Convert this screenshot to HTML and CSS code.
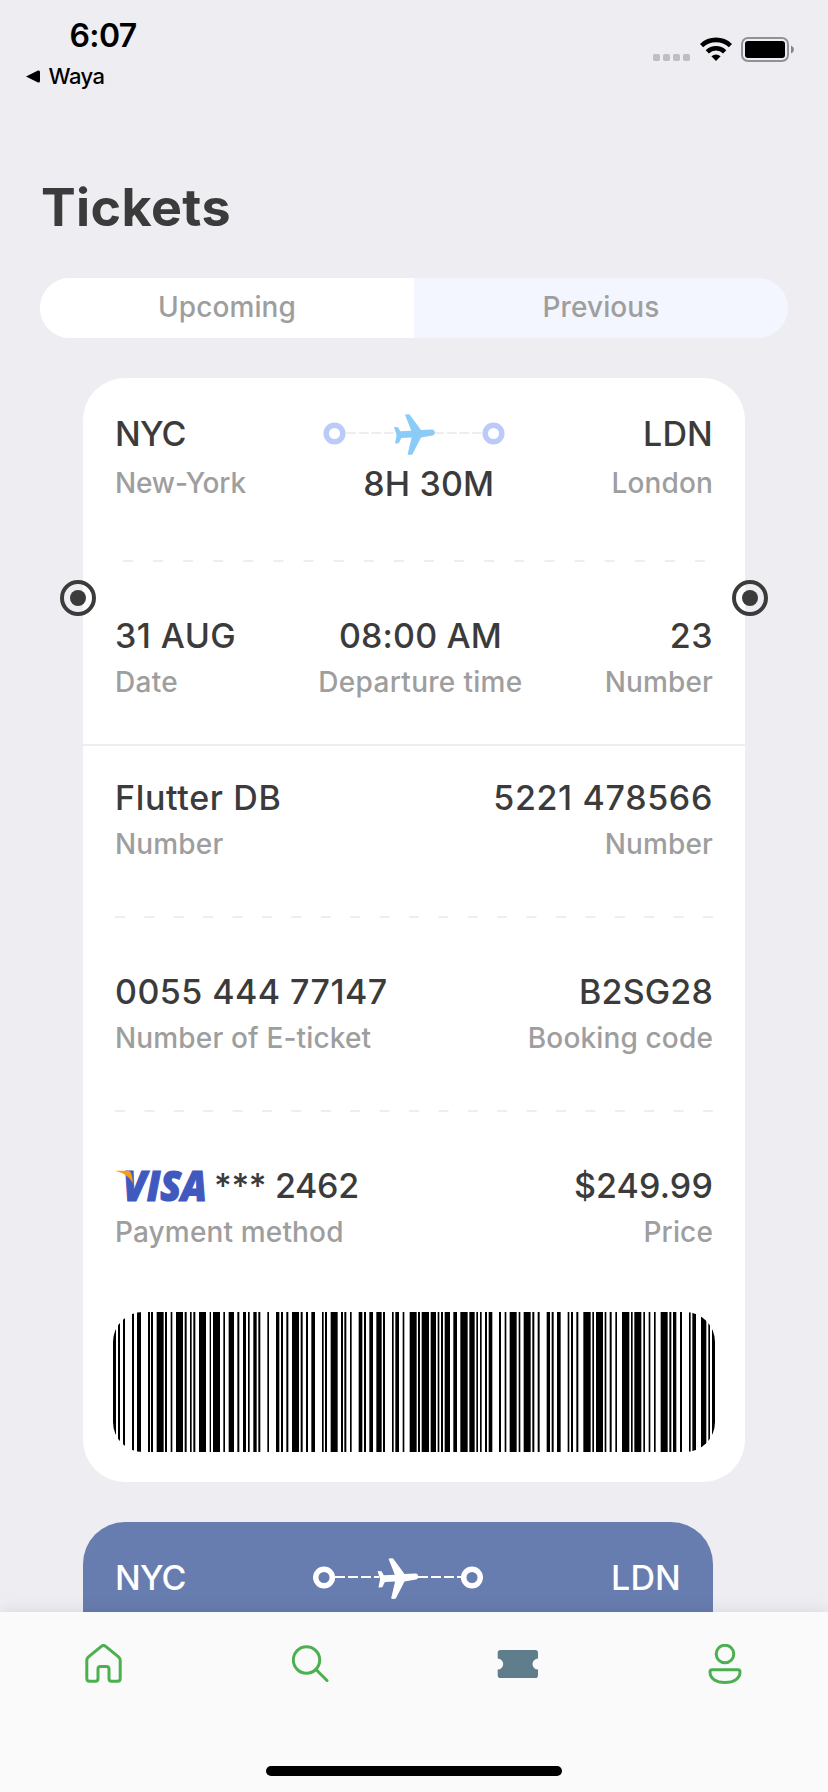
FILE: index.html
```html
<!DOCTYPE html>
<html lang="en">
<head>
<meta charset="utf-8">
<title>Tickets</title>
<link rel="stylesheet" href="styles.css">
</head>
<body>
<svg class="defs" aria-hidden="true">
  <symbol id="plane" viewBox="0 0 41 41"><path d="M0 13L4 13.2L6.3 17.2L17.3 16.8L11 .7Q13 0 15.6 .4L27 16.1L38 15.5C41.6 15.6 41.6 21 38.4 21.5L27 23.6L18.3 40.6Q16 41.2 13.6 40.6L17.6 23.6L7.4 24.1L4.8 29.3L1 29.6L2.6 21.3Z"/></symbol>
</svg>
<div class="screen">
  <header class="status">
    <div class="status-left">
      <div class="clock">6:07</div>
      <div class="back"><svg width="14" height="13" viewBox="0 0 14 13"><path d="M0 6.5L12 .5Q14 0 14 2V11Q14 13 12 12.5Z"/></svg><span>Waya</span></div>
    </div>
    <div class="status-right">
      <svg width="37" height="7" viewBox="0 0 37 7" fill="#bfbec3"><rect width="7" height="7" rx="1.8"/><rect x="10" width="7" height="7" rx="1.8"/><rect x="20" width="7" height="7" rx="1.8"/><rect x="30" width="7" height="7" rx="1.8"/></svg>
      <svg width="32" height="24" viewBox="0 0 32 24"><g fill="none" stroke="#000" stroke-width="4.6"><path d="M1.6 8.6A21 21 0 0 1 30.4 8.6"/><path d="M7.3 14.8A12.6 12.6 0 0 1 24.7 14.8"/></g><path d="M11.4 19.2Q16 15.8 20.6 19.2L16 24Z"/></svg>
      <svg width="53" height="25" viewBox="0 0 53 25"><rect x="1" y="1" width="46" height="23" rx="6" fill="none" stroke="#929196" stroke-width="2"/><rect x="4" y="4" width="40" height="17" rx="3"/><path d="M50 8.5Q53 10 53 12.5T50 16.5Z" fill="#858488"/></svg>
    </div>
  </header>

  <main class="content">
    <h1 class="title">Tickets</h1>
    <div class="tabs"><div class="tab active">Upcoming</div><div class="tab">Previous</div></div>

    <section class="ticket">
      <div class="route">
        <span class="value tight">NYC</span>
        <svg width="182" height="41" viewBox="0 0 182 41"><g fill="none" stroke="#bacbf8" stroke-width="5.5"><circle cx="11.5" cy="19.5" r="8.3"/><circle cx="170.5" cy="19.5" r="8.3"/></g><path d="M23 19H71M111 19H160" stroke="#eee" stroke-width="2" stroke-dasharray="10 2.7"/><use href="#plane" x="71" y="0" width="41" height="41" fill="#8accf7"/></svg>
        <span class="value end">LDN</span>
      </div>
      <div class="row cities"><span class="label snug">New-York</span><span class="value">8H 30M</span><span class="label">London</span></div>
      <div class="perforation"><svg width="582" height="2"><path d="M0 1H582" stroke="#eee" stroke-width="2" stroke-dasharray="10 20.1"/></svg></div>
      <div class="row details">
        <div class="cell"><span class="value medium">31 AUG</span><span class="label roomy">Date</span></div>
        <div class="cell mid"><span class="value">08:00 AM</span><span class="label roomy">Departure time</span></div>
        <div class="cell end"><span class="value medium">23</span><span class="label">Number</span></div>
      </div>
      <svg class="mark mark-left" viewBox="0 0 36 36"><circle cx="18" cy="18" r="16" fill="none" stroke="#3b3b3b" stroke-width="4"/><circle cx="18" cy="18" r="8" fill="#3b3b3b"/></svg>
      <svg class="mark mark-right" viewBox="0 0 36 36"><circle cx="18" cy="18" r="16" fill="none" stroke="#3b3b3b" stroke-width="4"/><circle cx="18" cy="18" r="8" fill="#3b3b3b"/></svg>
      <div class="rule"></div>
      <div class="row">
        <div class="cell"><span class="value wide">Flutter DB</span><span class="label">Number</span></div>
        <div class="cell end"><span class="value wide">5221 478566</span><span class="label">Number</span></div>
      </div>
      <svg class="dashes" width="598" height="2"><path d="M0 1H598" stroke="#eee" stroke-width="2" stroke-dasharray="10 19.4"/></svg>
      <div class="row details">
        <div class="cell"><span class="value medium">0055 444 77147</span><span class="label">Number of E-ticket</span></div>
        <div class="cell end"><span class="value">B2SG28</span><span class="label">Booking code</span></div>
      </div>
      <svg class="dashes" width="598" height="2"><path d="M0 1H598" stroke="#eee" stroke-width="2" stroke-dasharray="10 19.4"/></svg>
      <div class="row details">
        <div class="cell"><div class="payment"><svg class="visa" width="90" height="32" viewBox="0 0 90 32"><text class="visa-text" x="8" y="31" textLength="84" lengthAdjust="spacingAndGlyphs">VISA</text><path d="M0 .8H13.5Q17.5 1.2 17.8 13.5C15 7 9 3 0 .8Z" fill="#f99b14"/></svg><span class="value card-number">*** 2462</span></div><span class="label">Payment method</span></div>
        <div class="cell end"><span class="value">$249.99</span><span class="label">Price</span></div>
      </div>
      <svg class="barcode" viewBox="0 0 1806 420" preserveAspectRatio="none"><path id="bars"/></svg>
    </section>

    <section class="ticket blue">
      <div class="route">
        <span class="value tight">NYC</span>
        <svg width="170" height="41" viewBox="0 0 170 41"><g fill="none" stroke="#fff" stroke-width="5.5"><circle cx="11" cy="19.5" r="8.3"/><circle cx="159" cy="19.5" r="8.3"/></g><path d="M22 19H66M105 19H150" stroke="#fff" stroke-width="2" stroke-dasharray="10 3"/><use href="#plane" x="64.5" y="0" width="41" height="41" fill="#fff"/></svg>
        <span class="value end">LDN</span>
      </div>
    </section>
  </main>

  <nav class="nav">
    <div class="nav-items">
      <svg width="37" height="40" viewBox="0 0 37 40" class="line"><path d="M16 2.6Q18.5.4 21 2.6L33.5 12.8Q35.2 14.2 35.2 16.5V34.5Q35.2 37.3 32.4 37.3H26.6Q24 37.3 24 34.5V25Q24 22.4 21.4 22.4H15.6Q13 22.4 13 25V34.5Q13 37.3 10.4 37.3H4.6Q1.8 37.3 1.8 34.5V16.5Q1.8 14.2 3.5 12.8Z"/></svg>
      <svg width="37" height="40" viewBox="0 0 37 40" class="line"><circle cx="14.5" cy="16" r="13.2"/><path d="M24 25.5L35 36.5" stroke-linecap="round"/></svg>
      <svg width="42" height="40" viewBox="0 0 42 40"><path d="M3.5 6H38.2Q41 6 41 8.8V14.6A5.5 5.5 0 0 0 41 25.6V31.2Q41 34 38.2 34H3.5Q.7 34 .7 31.2V25.6A5.5 5.5 0 0 0 .7 14.6V8.8Q.7 6 3.5 6Z" fill="#5f7d8b"/></svg>
      <svg width="34" height="40" viewBox="0 0 34 40" class="line"><circle cx="17" cy="10" r="8.8"/><path d="M4 25.7H30Q32 25.7 32 28C32 34.5 26 38.4 17 38.4S2 34.5 2 28Q2 25.7 4 25.7Z"/></svg>
    </div>
    <div class="home-bar"></div>
  </nav>
</div>
<script src="barcode.js"></script>
</body>
</html>
```
FILE: styles.css
```css
* { box-sizing: border-box; }
body { margin: 0; background: #eeedf2; font-family: Inter, "Noto Sans", sans-serif; font-weight: 500; color: #3b3b3b; }
svg { display: block; flex: none; }
.defs { position: absolute; width: 0; height: 0; }
.screen { width: 828px; height: 1792px; display: flex; flex-direction: column; overflow: hidden; }
.status { flex: none; height: 176px; padding: 16px 34px 0 26px; display: flex; justify-content: space-between; color: #000; }
.clock { font-size: 32px; line-height: 40px; font-weight: 600; padding-left: 43.5px; letter-spacing: -.6px; }
.back { display: flex; align-items: center; gap: 8.5px; font-size: 22px; line-height: 27px; padding-top: 7px; letter-spacing: -.5px; }
.status-right { display: flex; align-items: flex-end; gap: 10px; height: 45px; }
.status-right svg:last-child { margin-bottom: -1px; margin-left: -1px; }
.content { flex: 1; min-height: 0; overflow: hidden; }
.title { margin: 0 0 38px 41px; font-size: 52px; line-height: 64px; font-weight: 680; letter-spacing: .4px; }
.tabs { display: flex; width: 748px; height: 60px; margin: 0 40px 40px; border-radius: 30px; overflow: hidden; background: #f3f6fe; }
.tab { flex: 1; text-align: center; font-size: 28px; line-height: 58px; letter-spacing: .1px; color: #9e9e9e; }
.tab.active { background: #fff; }
.ticket { position: relative; width: 662px; height: 1104px; margin: 0 0 40px 83px; padding: 36px 32px 30px; border-radius: 42px; background: #fff; }
.route { display: grid; grid-template-columns: 1fr auto 1fr; height: 40px; }
.value { display: block; font-size: 34px; line-height: 40px; font-weight: 460; letter-spacing: .15px; white-space: nowrap; }
.label { display: block; font-size: 28px; line-height: 36px; letter-spacing: .15px; color: #9e9e9e; white-space: nowrap; }
.tight { letter-spacing: -.8px; }
.snug { letter-spacing: -.15px; }
.card-number { letter-spacing: -.3px; }
.medium { letter-spacing: .45px; }
.wide { letter-spacing: .65px; }
.roomy { letter-spacing: .3px; }
.end { text-align: right; justify-self: end; }
.row { display: flex; justify-content: space-between; }
.cell { display: flex; flex-direction: column; gap: 8px; }
.mid { align-items: center; }
.cities { margin-top: 10px; height: 40px; }
.cities .label { line-height: 38px; }
.perforation { margin-top: 56px; padding-left: 8px; }
.details { margin-top: 54px; }
.mark { position: absolute; top: 202px; width: 36px; height: 36px; }
.mark-left { left: -23px; }
.mark-right { right: -23px; }
.rule { height: 2px; margin: 44px -32px 32px; background: #eee; }
.dashes { margin-top: 54px; }
.payment { display: flex; align-items: center; gap: 9px; height: 40px; }
.visa { overflow: visible; }
.visa-text { font: italic 800 42px "Open Sans", sans-serif; fill: #3f59bf; stroke: #3f59bf; stroke-width: 1.2px; }
.barcode { width: 602px; height: 140px; margin: 62px 0 0 -2px; border-radius: 30px; }
.blue { width: 630px; background: #687daf; color: #fff; }
.nav { position: relative; flex: none; height: 180px; background: #fafafa; box-shadow: 0 0 16px rgba(0,0,0,.1); }
.nav-items { display: grid; grid-template-columns: repeat(4, 1fr); justify-items: center; padding-top: 32px; }
.line { fill: none; stroke: #4caf50; stroke-width: 3; }
.home-bar { width: 296px; height: 10px; border-radius: 5px; background: #000; margin: 82px auto 0; }
```
FILE: barcode.js
```js
// Each pair is the left and right edge of one bar, in three groups with their own offsets.
const groups = [
  [-39, [39,48,54,60,69,75,96,102,111,123,144,150,153,159,170,191,195,201,212,217,228,249,254,260,270,275,280,286,297,318,329,333,339,360,370,375,386,402,412,418,429,438,444,449,460,470,475,481,502,507,528,538,543,549,559,565,576,597,602,608,618,624,634,645]],
  [591, [36,41,45,51,62,83,93,99,103,109,120,125,146,157,162,168,178,189,199,215,219,225,246,251,256,267,278,283,299,320,324,330,335,357,362,378,383,388,393,399,404,420,430,441,451,473,478,494,499,504,510,515,525,531,536,547,567,573,584,589,599,620,626,631,641,662]],
  [1221, [37,43,53,59,80,90,95,101,111,122,143,148,153,159,169,175,190,212,217,222,228,249,254,259,269,275,286,291,306,328,333,338,343,364,370,375,386,391,402,407,422,443,448,454,459,469,480,486,507,512,517,528,543,559,565,570,576,586]]
];
let d = '';
for (const [offset, edges] of groups) {
  for (let i = 0; i < edges.length; i += 2) {
    const w = edges[i + 1] - edges[i];
    d += `M${edges[i] + offset} 0h${w}v420h${-w}z`;
  }
}
document.getElementById('bars').setAttribute('d', d);
```
